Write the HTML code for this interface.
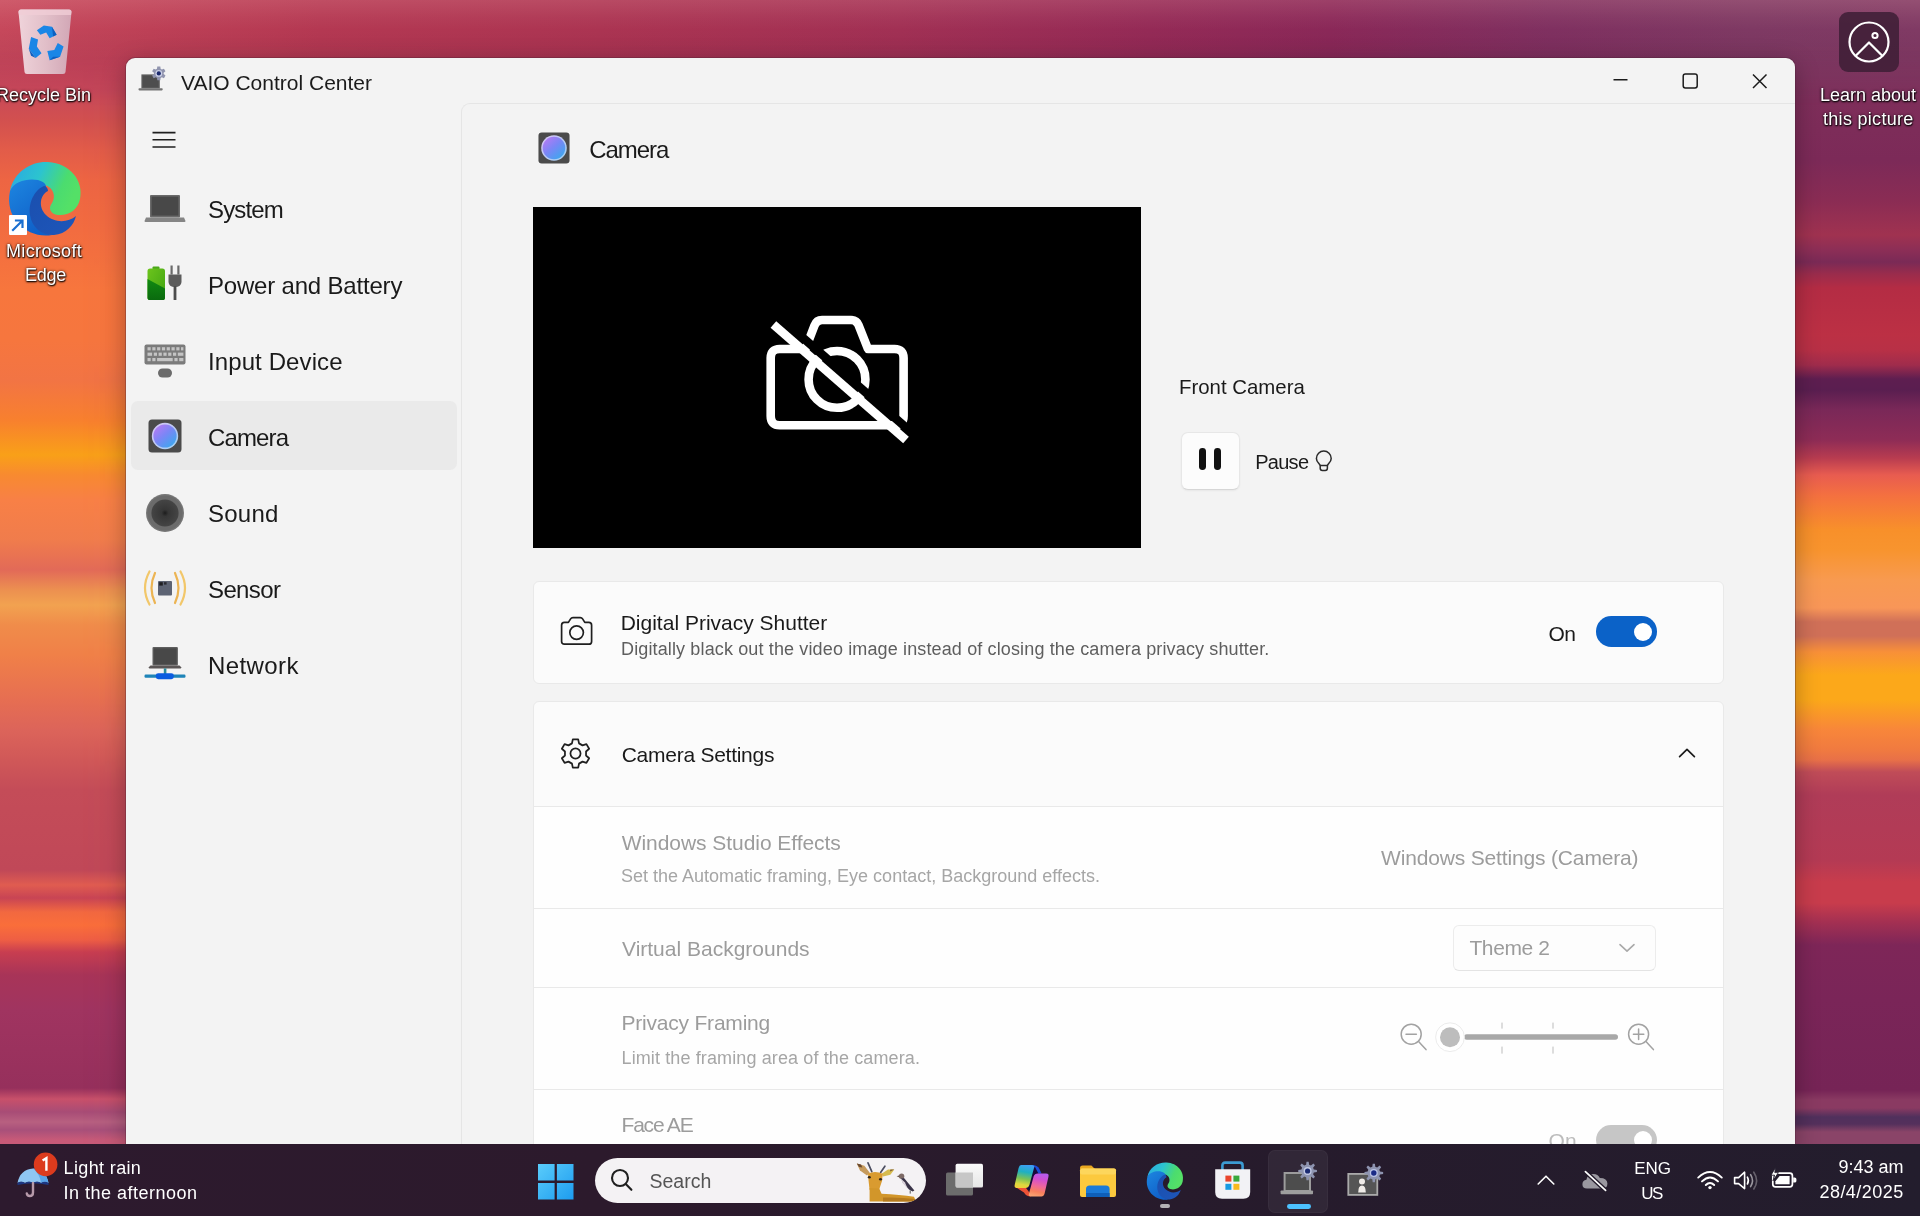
<!DOCTYPE html>
<html>
<head>
<meta charset="utf-8">
<title>VAIO Control Center</title>
<style>
*{box-sizing:border-box;margin:0;padding:0}
html,body{width:1920px;height:1216px;overflow:hidden}
body{font-family:"Liberation Sans",sans-serif;position:relative;background:#b03a55;color:#1b1b1b}
.abs{position:absolute}
svg{position:absolute;overflow:visible}
.t{position:absolute;white-space:nowrap;line-height:1}
#win,#tb,.dl{will-change:transform}
/* wallpaper */
#wpL{position:absolute;left:0;top:0;width:1920px;height:1216px;
background:linear-gradient(to bottom,#d05a62 0px,#c6465a 30px,#c4425a 60px,#c8485a 90px,#d2504f 120px,#e25c49 150px,#ed6543 180px,#f26c40 230px,#f7763d 290px,#f6763e 340px,#f27444 380px,#f8802e 420px,#f9a018 455px,#f88a30 475px,#f88046 500px,#f07c4c 540px,#e26a58 570px,#ec9050 590px,#f2a250 605px,#f08c4a 625px,#f08048 655px,#e66e52 700px,#dc645a 730px,#d05858 760px,#c44c58 790px,#c04858 870px,#e05c50 885px,#c84454 898px,#f26840 912px,#fa6e3a 925px,#ee5e44 940px,#c83e50 952px,#a83458 975px,#a03460 1010px,#96305c 1088px,#c8506a 1099px,#a84c76 1112px,#b86080 1122px,#a8507a 1130px,#c85a78 1140px,#c85a78 1144px);}
#wpR{position:absolute;left:0;top:0;width:1920px;height:1216px;
background:linear-gradient(to bottom,#823a64 0px,#7e2e5a 100px,#7c2a58 160px,#8a2c54 200px,#a03250 235px,#8c2e56 250px,#7a2a56 262px,#9a2c4c 274px,#b42c44 288px,#bc3044 335px,#b83046 350px,#a02c4c 365px,#5e1e50 379px,#5a1e50 390px,#7a2858 410px,#8e2c56 440px,#b83c50 458px,#e85c50 475px,#f47040 495px,#f8902a 530px,#f8942e 550px,#f89a50 580px,#f89658 608px,#d07058 622px,#d07058 636px,#f89038 652px,#fca81a 675px,#fca81a 700px,#f8863a 730px,#f07a40 750px,#e87048 760px,#c04c58 772px,#b03c58 795px,#b43a54 860px,#c83c4c 882px,#c83c4c 903px,#a43052 922px,#7e2658 945px,#7a2558 1000px,#762456 1090px,#8a3a62 1100px,#8a3a62 1108px,#50305c 1117px,#54305c 1124px,#8a4468 1132px,#8a4468 1144px);
-webkit-mask-image:linear-gradient(to right,transparent 80px,#000 1500px);mask-image:linear-gradient(to right,transparent 80px,#000 1500px);}
#wpT{position:absolute;left:0;top:0;width:1920px;height:110px;
background:linear-gradient(to bottom,rgba(255,190,190,.16) 0,rgba(255,190,190,.05) 18px,rgba(40,0,30,0) 30px,rgba(40,0,30,.06) 58px,rgba(40,0,30,.06) 110px),linear-gradient(to right,#c6485b 0,#bd4056 150px,#b43852 320px,#ab3452 600px,#a13054 900px,#942a56 1150px,#8a2858 1330px,#7f3060 1550px,#7e3963 1750px,#803a64 1920px);
-webkit-mask-image:linear-gradient(to bottom,#000 45px,transparent 105px);mask-image:linear-gradient(to bottom,#000 45px,transparent 105px)}
.dl{position:absolute;color:#fff;font-size:18px;line-height:24px;text-align:center;white-space:nowrap;text-shadow:0 1px 2px rgba(0,0,0,.9),0 0 3px rgba(0,0,0,.7),1px 1px 1px rgba(0,0,0,.6)}
/* window */
#win{position:absolute;left:126px;top:58px;width:1669px;height:1090px;background:#f3f3f3;border-radius:9px 9px 0 0;box-shadow:0 0 0 1px rgba(70,30,50,.30),0 6px 24px rgba(0,0,0,.30);overflow:hidden}
#content{position:absolute;left:335px;top:45px;width:1340px;height:1050px;border-left:1px solid #e5e5e5;border-top:1px solid #e5e5e5;border-radius:9px 0 0 0;background:#f3f3f3}
.nav{position:absolute;left:82px;font-size:24px;line-height:28px;white-space:nowrap;color:#1a1a1a}
#sel{position:absolute;left:5px;top:343px;width:326px;height:69.4px;border-radius:7px;background:#eaeaea}
.card{position:absolute;left:407px;width:1191px;background:#fbfbfb;border:1px solid #e9e9e9;border-radius:6px}
.h{font-size:21px;color:#1a1a1a}
.d{font-size:18px;color:#5e5e5e}
.dis{color:#9c9c9c}
.disd{color:#a6a6a6}
.row{position:absolute;left:0;width:1189px;border-top:1px solid #e9e9e9;background:#fefefe}
/* taskbar */
#tb{position:absolute;left:0;top:1144px;width:1920px;height:72px;background:linear-gradient(to right,#2d1a2e 0,#2c1a2c 600px,#261b2c 1300px,#231d2d 1920px)}
.tw{color:#fff;font-size:18px}
</style>
</head>
<body>
<div id="wpL"></div>
<div id="wpR"></div>
<div id="wpT"></div>

<!-- ===== desktop icons ===== -->
<!-- recycle bin -->
<svg style="left:14px;top:6px" width="62" height="72" viewBox="0 0 62 72">
  <defs>
    <linearGradient id="rbg" x1="0" y1="0" x2="1" y2="0"><stop offset="0" stop-color="#f3dfe5" stop-opacity=".92"/><stop offset=".5" stop-color="#e6d0d8" stop-opacity=".88"/><stop offset="1" stop-color="#d4b4c2" stop-opacity=".88"/></linearGradient>
  </defs>
  <path d="M4.5,6 Q4.5,3.5 7,3.5 L55,3.5 Q57.5,3.5 57.5,6 L51.5,66 Q51.3,68 49,68 L13,68 Q10.7,68 10.5,66 Z" fill="url(#rbg)"/>
  <path d="M4.5,6 Q4.5,3.5 7,3.5 L55,3.5 Q57.5,3.5 57.5,6 L57,9 L5,9Z" fill="#f0cdd6" opacity=".8"/>
  <g transform="translate(31,37.5) scale(1.16) translate(-31,-33.5)"><g fill="#1a86e6">
    <path d="M24,22 l6,-4 l7,1 l4,7 l-6,3 l-3,-5 l-5,2 z"/>
    <path d="M19,28 l6,2 l-1,6 l4,6 l-5,4 l-6,-8 z"/>
    <path d="M33,40 l6,-1 l3,-6 l5,3 l-3,9 l-9,3 z"/>
  </g>
  <g fill="#0d5fc0"><path d="M37,19 l4,7 l-3,1.5z"/><path d="M17,38 l6,8 l-4,-2z"/><path d="M44,45 l-9,3 l3,-3z"/></g></g>
</svg>
<div class="dl" id="rb" style="left:-4px;top:83px">Recycle Bin</div>

<!-- edge -->
<svg style="left:8px;top:161px" width="74" height="75" viewBox="0 0 74 75">
  <defs>
    <linearGradient id="eg1" x1="0" y1="0" x2="1" y2="0.35"><stop offset="0" stop-color="#2aa6e4"/><stop offset=".45" stop-color="#2cc4cf"/><stop offset=".8" stop-color="#4bdc6f"/><stop offset="1" stop-color="#54e067"/></linearGradient>
    <linearGradient id="eg2" x1="0" y1="0" x2="0.6" y2="1"><stop offset="0" stop-color="#1d86e0"/><stop offset="1" stop-color="#0f5fc8"/></linearGradient>
    <linearGradient id="eg3" x1="0" y1="0" x2="1" y2="1"><stop offset="0" stop-color="#1a4fae"/><stop offset="1" stop-color="#1e56ba"/></linearGradient>
  </defs>
  <!-- top swoosh -->
  <path d="M2,30 C6,10 24,0 40,1 C62,2 76,20 72,38 C70,49 60,55 50,54 C42,53 40,47 44,42 C48,36 46,26 36,24 C26,20 8,20 2,30Z" fill="url(#eg1)"/>
  <!-- left blue -->
  <path d="M2,30 C6,20 20,17 30,19 C38,21 40,26 36,29 C26,36 22,50 32,66 C36,71 42,74 44,74 C20,78 -4,58 2,30Z" fill="url(#eg2)"/>
  <!-- dark wave -->
  <path d="M36,25 C28,28 20,40 22,54 C24,68 36,75 46,74 C58,73 66,64 68,55 C60,62 46,62 38,54 C30,46 32,34 40,30 C40,27 38,25 36,25Z" fill="url(#eg3)"/>
</svg>
<div class="abs" style="left:9px;top:215px;width:18px;height:20px;background:#fff;border-radius:1px"></div>
<svg style="left:9px;top:215px" width="18" height="20" viewBox="0 0 18 20"><path d="M4,15 L13,6 M7,5.5 L13.5,5.5 L13.5,12" stroke="#1a6fd0" stroke-width="2.2" fill="none" stroke-linecap="square"/></svg>
<div class="dl" id="ms" style="left:6.4px;top:238.5px;letter-spacing:0.35px">Microsoft</div>
<div class="dl" id="ed" style="left:24.6px;top:263.1px;letter-spacing:-0.3px">Edge</div>

<!-- learn about this picture -->
<div class="abs" style="left:1839px;top:12px;width:60px;height:60px;border-radius:9px;background:rgba(62,30,54,.86)"></div>
<svg style="left:1847px;top:20px" width="44" height="44" viewBox="0 0 44 44" fill="none" stroke="#fff" stroke-width="2.2">
  <circle cx="22" cy="22" r="19.5"/>
  <circle cx="28" cy="15.5" r="2.6" stroke-width="2"/>
  <path d="M8.5,36 L22,22.5 L35.5,36" stroke-linejoin="round"/>
</svg>
<div class="dl" id="la" style="left:1819.7px;top:83px">Learn about</div>
<div class="dl" id="tp" style="left:1822.6px;top:106.8px;letter-spacing:0.3px">this picture</div>

<!-- ===== app window ===== -->
<div id="win">
  <!-- title icon: laptop + gear (win-relative) -->
  <svg style="left:12px;top:5px" width="30" height="30" viewBox="0 0 30 30">
    <rect x="3.4" y="11.4" width="18.4" height="14" fill="#5c5c5c"/>
    <rect x="4.8" y="12.8" width="15.6" height="11.4" fill="#4e4e4e"/>
    <rect x="0.5" y="25.2" width="24.2" height="2.2" rx=".8" fill="#747474"/>
    <g transform="translate(20.8,10.4)"><path d="M-1.80,-4.56 L-1.53,-6.83 L1.53,-6.83 L1.80,-4.56 L3.04,-3.84 L5.15,-4.74 L6.68,-2.09 L4.85,-0.72 L4.85,0.72 L6.68,2.09 L5.15,4.74 L3.04,3.84 L1.80,4.56 L1.53,6.83 L-1.53,6.83 L-1.80,4.56 L-3.04,3.84 L-5.15,4.74 L-6.68,2.09 L-4.85,0.72 L-4.85,-0.72 L-6.68,-2.09 L-5.15,-4.74 L-3.04,-3.84Z" fill="#9094ae"/><circle r="3.4" fill="#c9cee6"/><circle r="2.1" fill="#1c2a6e"/></g>
  </svg>
  <div class="t" id="ttl" style="left:55px;top:13px;font-size:21px;line-height:24px">VAIO Control Center</div>
  <!-- window buttons -->
  <svg style="left:1480px;top:8px" width="170" height="30" viewBox="0 0 170 30" fill="none" stroke="#1a1a1a" stroke-width="1.5">
    <path d="M7.5,13.8 H21.5"/>
    <rect x="77.2" y="8" width="14" height="14" rx="2.2"/>
    <path d="M147,8.5 L160.5,22 M160.5,8.5 L147,22"/>
  </svg>
  <div id="content"></div>
  <!-- hamburger -->
  <svg style="left:26px;top:72px" width="26" height="20" viewBox="0 0 26 20" stroke="#1f1f1f" stroke-width="1.6"><path d="M0.5,2.6 H23.5 M0.5,9.8 H23.5 M0.5,17 H23.5"/></svg>
  <div id="sel"></div>

  <!-- System -->
  <svg style="left:17px;top:134px" width="44" height="34" viewBox="0 0 44 34">
    <rect x="7" y="3" width="30" height="22.5" rx="1" fill="#6a6a6a"/>
    <rect x="8.6" y="4.6" width="26.8" height="19" fill="#484848"/>
    <path d="M3,25.5 H41 L42.5,29 Q42.5,30 41.5,30 H2.5 Q1.5,30 1.5,29Z" fill="#858585"/>
  </svg>
  <div class="nav" id="n1" style="top:138px;letter-spacing:-0.86px">System</div>

  <!-- Power and Battery -->
  <svg style="left:20px;top:206px" width="38" height="38" viewBox="0 0 38 38">
    <defs><linearGradient id="bt1" x1="0" y1="0" x2="1" y2="1"><stop offset="0" stop-color="#6cc41c"/><stop offset="1" stop-color="#3fa312"/></linearGradient>
    <linearGradient id="bt2" x1="0" y1="0" x2="0" y2="1"><stop offset="0" stop-color="#118a12"/><stop offset="1" stop-color="#0a6a0e"/></linearGradient></defs>
    <rect x="6.5" y="2.5" width="7" height="3" rx="1" fill="#4aa818"/>
    <rect x="1.5" y="4.5" width="17.5" height="31.5" rx="2.6" fill="url(#bt1)"/>
    <path d="M1.5,15 L19,24.5 V33.4 Q19,36 16.4,36 H4.1 Q1.5,36 1.5,33.4Z" fill="url(#bt2)"/>
    <rect x="24.5" y="1.5" width="2.2" height="9" fill="#6a6a6a"/><rect x="31.3" y="1.5" width="2.2" height="9" fill="#6a6a6a"/>
    <path d="M22.5,10.5 H35.5 V17.5 Q35.5,23 29,23 Q22.5,23 22.5,17.5Z" fill="#5c5c5c"/>
    <rect x="27.6" y="22" width="2.8" height="14" fill="#4c4c4c"/>
  </svg>
  <div class="nav" id="n2" style="top:214px;letter-spacing:-0.19px">Power and Battery</div>

  <!-- Input Device -->
  <svg style="left:17px;top:285px" width="44" height="36" viewBox="0 0 44 36">
    <rect x="1.5" y="1.5" width="41" height="20" rx="2" fill="#7b7b7b"/>
    <g fill="#c4c4c4">
      <rect x="4.5" y="4.2" width="3.2" height="3.2"/><rect x="9.3" y="4.2" width="3.2" height="3.2"/><rect x="14.1" y="4.2" width="3.2" height="3.2"/><rect x="18.9" y="4.2" width="3.2" height="3.2"/><rect x="23.7" y="4.2" width="3.2" height="3.2"/><rect x="28.5" y="4.2" width="3.2" height="3.2"/><rect x="33.3" y="4.2" width="3.2" height="3.2"/><rect x="38" y="4.2" width="2.4" height="3.2"/>
      <rect x="4.5" y="9.6" width="4.6" height="3.2"/><rect x="10.8" y="9.6" width="3.2" height="3.2"/><rect x="15.6" y="9.6" width="3.2" height="3.2"/><rect x="20.4" y="9.6" width="3.2" height="3.2"/><rect x="25.2" y="9.6" width="3.2" height="3.2"/><rect x="30" y="9.6" width="3.2" height="3.2"/><rect x="34.8" y="9.6" width="5.6" height="3.2"/>
      <rect x="4.5" y="15" width="3.2" height="3.2"/><rect x="9.3" y="15" width="3.2" height="3.2"/><rect x="14.1" y="15" width="15.6" height="3.2"/><rect x="31.4" y="15" width="3.2" height="3.2"/><rect x="36.2" y="15" width="4.2" height="3.2"/>
    </g>
    <rect x="15" y="25.5" width="14" height="9" rx="4.5" fill="#6b6b6b"/>
  </svg>
  <div class="nav" id="n3" style="top:290px;letter-spacing:0.1px">Input Device</div>

  <!-- Camera -->
  <svg style="left:22px;top:361px" width="34" height="34" viewBox="0 0 34 34">
    <defs><linearGradient id="cm1" x1="0.15" y1="0.1" x2="0.85" y2="0.9"><stop offset="0" stop-color="#b07cf4"/><stop offset=".45" stop-color="#7b86f6"/><stop offset="1" stop-color="#3fa6ee"/></linearGradient>
    <linearGradient id="cm2" x1="0" y1="0" x2="1" y2="1"><stop offset="0" stop-color="#d8c4f6"/><stop offset="1" stop-color="#9fd0f2"/></linearGradient></defs>
    <rect x=".5" y=".5" width="33" height="33" rx="3.5" fill="#4b4b4b"/>
    <circle cx="17" cy="17" r="13.2" fill="url(#cm2)"/>
    <circle cx="17" cy="17" r="11.6" fill="url(#cm1)"/>
  </svg>
  <div class="nav" id="n4" style="top:366px;letter-spacing:-0.87px">Camera</div>

  <!-- Sound -->
  <svg style="left:19px;top:435px" width="40" height="40" viewBox="0 0 40 40">
    <defs><radialGradient id="sd1"><stop offset="0" stop-color="#1c1c1c"/><stop offset=".25" stop-color="#363636"/><stop offset="1" stop-color="#454545"/></radialGradient></defs>
    <circle cx="20" cy="20" r="19" fill="#767676"/>
    <circle cx="20" cy="20" r="17.6" fill="#6b6b6b"/>
    <circle cx="20" cy="20" r="13.6" fill="url(#sd1)"/>
  </svg>
  <div class="nav" id="n5" style="top:442px;letter-spacing:0.24px">Sound</div>

  <!-- Sensor -->
  <svg style="left:17px;top:511px" width="44" height="38" viewBox="0 0 44 38" fill="none">
    <rect x="15" y="12" width="14" height="14.5" rx="1" fill="#5d6373"/>
    <rect x="16.2" y="13.2" width="3.6" height="3.4" fill="#1e1e22"/><rect x="21" y="13.2" width="2.6" height="2.4" fill="#2a2a30"/>
    <g stroke-linecap="round" stroke-width="2.2">
      <path d="M12,4 Q5,19 12,34" stroke="#ecb453"/>
      <path d="M6.5,2.5 Q-2.5,19 6.5,35.5" stroke="#f2c76a"/>
      <path d="M32,4 Q39,19 32,34" stroke="#ecb453"/>
      <path d="M37.5,2.5 Q46.5,19 37.5,35.5" stroke="#f2c76a"/>
    </g>
  </svg>
  <div class="nav" id="n6" style="top:518px;letter-spacing:-0.63px">Sensor</div>

  <!-- Network -->
  <svg style="left:17px;top:587px" width="44" height="36" viewBox="0 0 44 36">
    <rect x="9.5" y="2" width="25.4" height="18.5" rx="1" fill="#5e5e5e"/>
    <rect x="10.8" y="3.3" width="22.8" height="16" fill="#484848"/>
    <path d="M7.5,20.5 H36.5 L38.5,22.6 Q38.5,23.4 37.5,23.4 H6.5 Q5.5,23.4 5.5,22.6Z" fill="#5a5555"/>
    <rect x="20.8" y="23.4" width="2.6" height="6" fill="#2b8c9c"/>
    <rect x="1.5" y="29.6" width="41" height="3.2" rx="1.2" fill="#1e84b8"/>
    <rect x="12.8" y="28.2" width="18" height="6" rx="2.4" fill="#0b5ce0"/>
  </svg>
  <div class="nav" id="n7" style="top:594px;letter-spacing:0.4px">Network</div>

  <!-- ===== page content ===== -->
  <svg style="left:412px;top:74px" width="32" height="32" viewBox="0 0 34 34">
    <rect x=".5" y=".5" width="33" height="33" rx="3.5" fill="#4b4b4b"/>
    <circle cx="17" cy="17" r="13.6" fill="url(#cm2)"/>
    <circle cx="17" cy="17" r="12" fill="url(#cm1)"/>
  </svg>
  <div class="t" id="hdr" style="left:463.3px;top:78.4px;font-size:24px;line-height:28px;color:#1a1a1a;letter-spacing:-1.06px">Camera</div>

  <div class="abs" style="left:407px;top:149px;width:608px;height:341px;background:#000">
    <svg style="left:0;top:0" width="608" height="341" viewBox="0 0 608 341" fill="none" stroke="#fff" stroke-width="8.6" stroke-linejoin="round">
      <path d="M237.7,151 Q237.7,142 246.7,142 L272.5,142 L281.5,118.5 Q283.5,113 289,113 L318,113 Q323.5,113 325.5,118 L335,142 L361.6,142 Q370.6,142 370.6,151 L370.6,209 Q370.6,218.2 361.6,218.2 L246.7,218.2 Q237.7,218.2 237.7,209 Z"/>
      <circle cx="304" cy="172.4" r="28.4"/>
      <path d="M246.6,110.6 L381.6,228" stroke="#000" stroke-width="8.6" stroke-linecap="butt"/>
      <path d="M240.4,117.6 L373,233" stroke-linecap="butt"/>
    </svg>
  </div>

  <div class="t" id="fc" style="left:1053px;top:316.9px;font-size:20.4px;line-height:24px;color:#1a1a1a">Front Camera</div>
  <div class="abs" style="left:1054.5px;top:373.5px;width:59px;height:58px;background:#fcfcfc;border:1px solid #e7e7e7;border-bottom-color:#d6d6d6;border-radius:7px;box-shadow:0 1px 2px rgba(0,0,0,.05)"></div>
  <div class="abs" style="left:1073px;top:390px;width:7.2px;height:22px;border-radius:3.4px;background:#111"></div>
  <div class="abs" style="left:1087.6px;top:390px;width:7.2px;height:22px;border-radius:3.4px;background:#111"></div>
  <div class="t" id="pz" style="left:1129.25px;top:391.8px;line-height:24px;font-size:20px;color:#1a1a1a;letter-spacing:-0.74px">Pause</div>
  <!-- lightbulb -->
  <svg style="left:1188px;top:392px" width="20" height="24" viewBox="0 0 20 24" fill="none" stroke="#2a2a2a" stroke-width="1.5">
    <path d="M6.2,15.5 C5.6,13.4 2.4,12 2.4,8.4 A7.4,7.4 0 0 1 17.2,8.4 C17.2,12 14,13.4 13.4,15.5"/>
    <path d="M6.2,15.6 H13.4 V18.2 Q13.4,20.4 11.2,20.4 H8.4 Q6.2,20.4 6.2,18.2Z" stroke-linejoin="round"/>
  </svg>

  <!-- card 1 -->
  <div class="card" style="top:523px;height:103px">
    <svg style="left:26px;top:34px" width="34" height="30" viewBox="0 0 34 30" fill="none" stroke="#1f1f1f" stroke-width="1.7" stroke-linejoin="round">
      <path d="M1.6,9.2 Q1.6,6.4 4.4,6.4 H8.4 L10.6,2.9 Q11.4,1.6 12.9,1.6 H20.3 Q21.8,1.6 22.6,2.9 L24.8,6.4 H28.8 Q31.6,6.4 31.6,9.2 V25.4 Q31.6,28.2 28.8,28.2 H4.4 Q1.6,28.2 1.6,25.4Z"/>
      <circle cx="16.6" cy="16.6" r="6.8"/>
    </svg>
    <div class="t h" id="dps" style="left:86.7px;top:28.7px;line-height:24px">Digital Privacy Shutter</div>
    <div class="t d" id="dpd" style="left:87px;top:55.8px;line-height:22px;letter-spacing:0.135px">Digitally black out the video image instead of closing the camera privacy shutter.</div>
    <div class="t h" id="on1" style="left:1014.6px;top:39.5px;line-height:24px;letter-spacing:-0.75px">On</div>
    <div class="abs" style="left:1061.6px;top:34.4px;width:61px;height:30.6px;border-radius:15.3px;background:#0b62c8"></div>
    <div class="abs" style="left:1100px;top:40.9px;width:18px;height:18px;border-radius:9px;background:#fff"></div>
  </div>

  <!-- card 2 -->
  <div class="card" style="top:643px;height:470px;border-radius:6px 6px 0 0">
    <svg style="left:25px;top:35px" width="33" height="33" viewBox="0 0 32 32" fill="none" stroke="#1f1f1f" stroke-width="1.7" stroke-linejoin="round">
      <path d="M12.58,6.18 L13.38,2.25 L18.62,2.25 L19.42,6.18 L22.80,8.13 L26.60,6.85 L29.22,11.40 L26.22,14.05 L26.22,17.95 L29.22,20.60 L26.60,25.15 L22.80,23.87 L19.42,25.82 L18.62,29.75 L13.38,29.75 L12.58,25.82 L9.20,23.87 L5.40,25.15 L2.78,20.60 L5.78,17.95 L5.78,14.05 L2.78,11.40 L5.40,6.85 L9.20,8.13Z" stroke-linejoin="round"/>
      <circle cx="16" cy="16" r="4.9"/>
    </svg>
    <div class="t h" id="cs" style="left:87.7px;top:41.4px;line-height:24px;letter-spacing:-0.26px">Camera Settings</div>
    <svg style="left:1143px;top:44px" width="20" height="14" viewBox="0 0 20 14" fill="none" stroke="#1a1a1a" stroke-width="1.7" stroke-linecap="round" stroke-linejoin="round"><path d="M2.6,10.6 L10,3.4 L17.4,10.6"/></svg>

    <div class="row" style="top:104px;height:102px">
      <div class="t h dis" id="wse" style="left:87.7px;top:23.7px;line-height:24px;letter-spacing:-0.05px">Windows Studio Effects</div>
      <div class="t d disd" id="wsd" style="left:87px;top:58.4px;line-height:22px">Set the Automatic framing, Eye contact, Background effects.</div>
      <div class="t h dis" id="wsc" style="left:847px;top:39px;line-height:24px;letter-spacing:-0.16px">Windows Settings (Camera)</div>
    </div>
    <div class="row" style="top:206px;height:79px">
      <div class="t h dis" id="vb" style="left:88px;top:27.7px;line-height:24px">Virtual Backgrounds</div>
      <div class="abs" style="left:918.6px;top:15.5px;width:203px;height:46px;border:1px solid #ececec;border-bottom-color:#e4e4e4;border-radius:6px;background:#fdfdfd"></div>
      <div class="t h dis" id="th2" style="left:935.4px;top:27px;line-height:24px;letter-spacing:-0.38px">Theme 2</div>
      <svg style="left:1084px;top:33px" width="18" height="12" viewBox="0 0 18 12" fill="none" stroke="#a9a9a9" stroke-width="1.6" stroke-linecap="round" stroke-linejoin="round"><path d="M2,2.6 L9,9.2 L16,2.6"/></svg>
    </div>
    <div class="row" style="top:285px;height:102px">
      <div class="t h dis" id="pf" style="left:87.5px;top:23.4px;line-height:24px;letter-spacing:-0.21px">Privacy Framing</div>
      <div class="t d disd" id="pfd" style="left:87.5px;top:58.8px;line-height:22px;letter-spacing:0.12px">Limit the framing area of the camera.</div>
      <!-- slider: row origin body (534,988) -->
      <svg style="left:864px;top:30px" width="260" height="40" viewBox="0 0 260 40" fill="none">
        <g stroke="#a2a2a2" stroke-width="1.5" stroke-linecap="round">
          <circle cx="13.2" cy="16.2" r="10"/><path d="M8,16.2 H18.4"/><path d="M20.6,23.6 L28,31.6"/>
          <circle cx="240.6" cy="16.2" r="10"/><path d="M235.4,16.2 H245.8 M240.6,11 V21.4"/><path d="M248,23.6 L255.4,31.6"/>
        </g>
        <rect x="66" y="16.2" width="154" height="5.6" rx="2.8" fill="#a8a8a8"/>
        <g stroke="#bcbcbc" stroke-width="1"><path d="M104,4.6 V10.6 M104,28.6 V35.6 M155,4.6 V10.6 M155,28.6 V35.6"/></g>
        <circle cx="52" cy="19.2" r="14.4" fill="#fff" stroke="#ececec" stroke-width="1"/>
        <circle cx="52" cy="19.2" r="10" fill="#bdbdbd"/>
      </svg>
    </div>
    <div class="row" style="top:387px;height:90px">
      <div class="t h dis" id="fae" style="left:87.5px;top:23.4px;line-height:24px;letter-spacing:-1.2px">Face AE</div>
      <div class="t h" id="on2" style="left:1014.6px;top:38.5px;line-height:24px;color:#bcbcbc">On</div>
      <div class="abs" style="left:1061.6px;top:34.8px;width:61px;height:30.6px;border-radius:15.3px;background:#c6c6c6"></div>
      <div class="abs" style="left:1100px;top:41.2px;width:18px;height:18px;border-radius:9px;background:#fff"></div>
    </div>
  </div>
</div>

<!-- ===== taskbar ===== -->
<div id="tb">
  <!-- weather -->
  <svg style="left:14px;top:6px" width="50" height="50" viewBox="0 0 50 50">
    <path d="M3.5,33 Q6,19.5 19,18.5 Q32,19.5 34.5,33 Q31,30.6 27,33 Q23,30.6 19,33 Q15,30.6 11,33 Q7,30.6 3.5,33Z" fill="#8fc6f2"/>
    <path d="M19,18.5 Q32,19.5 34.5,33 Q31,30.6 27,33 Q26,24 19,18.5Z" fill="#5aa4e8"/>
    <path d="M3.5,33 Q7,30.6 11,33 Q15,30.6 19,33 Q23,30.6 27,33 Q31,30.6 34.5,33 L34.5,35 Q19,31.4 3.5,35Z" fill="#1b3a8c" opacity=".9"/>
    <path d="M19,33 V42.5 Q19,46 15.8,46 Q13,46 12.8,43.4" fill="none" stroke="#b79aaa" stroke-width="2.4" stroke-linecap="round"/>
    <circle cx="31.6" cy="14.4" r="11.8" fill="#dc3b1e"/>
    <path d="M28.6,10.6 L32.4,8.2 V20.8" fill="none" stroke="#fff" stroke-width="2.4" stroke-linejoin="miter"/>
  </svg>
  <div class="t tw" id="w1" style="left:63.6px;top:13.8px;line-height:20px;letter-spacing:0.36px">Light rain</div>
  <div class="t tw" id="w2" style="left:63.6px;top:38.5px;line-height:20px;letter-spacing:0.48px">In the afternoon</div>

  <!-- start -->
  <svg style="left:538px;top:19.6px" width="36" height="36" viewBox="0 0 36 36">
    <defs><linearGradient id="wn" x1="0" y1="0" x2="1" y2="1"><stop offset="0" stop-color="#5accfa"/><stop offset="1" stop-color="#1d9cf0"/></linearGradient></defs>
    <path d="M0,0 H16.6 V16.6 H0Z M18.9,0 H35.5 V16.6 H18.9Z M0,18.9 H16.6 V35.5 H0Z M18.9,18.9 H35.5 V35.5 H18.9Z" fill="url(#wn)"/>
  </svg>

  <!-- search -->
  <div class="abs" style="left:595px;top:13.6px;width:331px;height:45px;border-radius:22.5px;background:#f4f2f4;overflow:hidden">
    <svg style="left:255px;top:0" width="76" height="45" viewBox="0 0 76 45">
      <!-- deer -->
      <path d="M6.8,5.4 L14.4,7.8 L19.8,14.8 L17,17.6 L10,12.4Z" fill="#c59a5c"/>
      <path d="M6.8,5.4 L11,6.6 L12.4,9.6 L9,9Z" fill="#6a4a30"/>
      <path d="M44.3,11.5 L38,11.6 L32,15.4 L33,18.6 L40.4,16.8Z" fill="#d6bb4e"/>
      <path d="M44.3,11.5 L40.4,11.4 L40,13.4Z" fill="#7a5a30"/>
      <path d="M18,4.9 L21.8,13.6" stroke="#4c4e60" stroke-width="1.7" fill="none" stroke-linecap="round"/>
      <path d="M34.9,8.2 L30.6,14.4" stroke="#4c4e60" stroke-width="1.7" fill="none" stroke-linecap="round"/>
      <path d="M18,15.6 Q25,12.2 32.8,15.8 L32,23 L29,32 Q24,34.6 19.6,32 L18.6,23Z" fill="#d99b30"/>
      <path d="M19.6,30 L29.2,30.6 L31.6,35.8 Q50,36.6 64,38.8 L66,43.6 L19.6,43.6Z" fill="#d2962a"/>
      <path d="M33,39.6 Q50,39 65,41 L66,43.6 L33,43.6Z" fill="#b57a1e"/>
      <ellipse cx="19.3" cy="19.3" rx="1.5" ry="1.2" fill="#2e2216"/><ellipse cx="30.5" cy="21.2" rx="1.5" ry="1.2" fill="#2e2216"/>
      <!-- bird -->
      <circle cx="51.6" cy="18.2" r="2.7" fill="#7d6a66"/>
      <path d="M49.4,17.2 L46.6,18.2 L49.6,19.4Z" fill="#6b5a50"/>
      <path d="M51,20.4 L54,20 L64.4,32.6 L62.6,33.6 L59,31.4 L53,25Z" fill="#3a3448"/>
      <path d="M50.8,20.6 L53,25.4 L57.6,30.4 L55,24.4Z" fill="#ddd6de"/>
      <path d="M60.2,32.4 V35.6" stroke="#555" stroke-width="1"/>
    </svg>
  </div>
  <svg style="left:608px;top:22px" width="28" height="28" viewBox="0 0 28 28" fill="none" stroke="#1f1f1f" stroke-width="2.1" stroke-linecap="round"><circle cx="12" cy="12" r="8"/><path d="M18,18.2 L23.4,23.8"/></svg>
  <div class="t" id="srch" style="left:649.5px;top:25.7px;font-size:19.5px;line-height:22px;color:#555">Search</div>

  <!-- task view -->
  <svg style="left:945px;top:18px" width="40" height="36" viewBox="0 0 40 36">
    <defs><linearGradient id="tv1" x1="0" y1="0" x2="0" y2="1"><stop offset="0" stop-color="#fafafa"/><stop offset="1" stop-color="#e6e6e6"/></linearGradient></defs>
    <rect x="1" y="10.6" width="27" height="23" rx="1.6" fill="#6c6c6c"/>
    <rect x="10.6" y="1.8" width="27.4" height="23.8" rx="1.6" fill="url(#tv1)"/>
    <path d="M10.6,10.6 H28 V25.6 H12.2 Q10.6,25.6 10.6,24Z" fill="#c2c2c2" opacity=".9"/>
  </svg>

  <!-- copilot -->
  <svg style="left:1013px;top:19px" width="38" height="36" viewBox="0 0 38 36">
    <defs>
      <linearGradient id="cp1" x1="0.55" y1="0" x2="0.4" y2="1"><stop offset="0" stop-color="#3d9ff2"/><stop offset=".3" stop-color="#1fb0c2"/><stop offset=".6" stop-color="#7cc255"/><stop offset=".85" stop-color="#dcd83e"/><stop offset="1" stop-color="#f0cf3c"/></linearGradient>
      <linearGradient id="cp2" x1="0.6" y1="0" x2="0.4" y2="1"><stop offset="0" stop-color="#b65cec"/><stop offset=".25" stop-color="#d24fd0"/><stop offset=".55" stop-color="#f0689a"/><stop offset=".8" stop-color="#f8805c"/><stop offset="1" stop-color="#f9a070"/></linearGradient>
    </defs>
    <path d="M19,2 Q24.4,2 26.4,6 L28.6,10.6 H23 L20,6Z" fill="#1c4cd8"/>
    <path d="M4,25 H13 L16,29 L18,33.4 Q13,33.4 11,29.4Z" fill="#ee5236"/>
    <path d="M14,7 L22,4 L25.4,10.6 L22.4,13 L18,28 L14,26Z" fill="#180a3c"/>
    <path d="M8,2 H19 Q22,2 21,5 L16.4,22 Q15.4,25 12.4,25 H4.4 Q0.8,25 1.8,21.6 L5.6,5 Q6.4,2 8,2Z" fill="url(#cp1)"/>
    <path d="M24.8,10.6 H33 Q36.4,10.6 35.4,14 L31.6,30.4 Q30.8,33.4 28.4,33.4 H18 Q15,33.4 16,30.4 L20.6,13.6 Q21.6,10.6 24.8,10.6Z" fill="url(#cp2)"/>
  </svg>

  <!-- file explorer -->
  <svg style="left:1079px;top:19px" width="38" height="36" viewBox="0 0 38 36">
    <path d="M1,5 Q1,2.4 3.6,2.4 H12.4 L16,6 H1Z" fill="#e9a820"/>
    <rect x="1" y="5.4" width="36" height="28.6" rx="2" fill="#fcc93e"/>
    <rect x="1" y="5.4" width="36" height="6" rx="2" fill="#fdd65c"/>
    <path d="M7,34 V26 Q7,22.4 10.6,22.4 H27 Q30.6,22.4 30.6,26 V34Z" fill="#1a7ad8"/>
    <rect x="7" y="30" width="23.6" height="4" fill="#0f5fb8"/>
  </svg>

  <!-- edge small -->
  <svg style="left:1146px;top:17.6px" width="38" height="38" viewBox="0 0 74 75">
    <path d="M2,30 C6,10 24,0 40,1 C62,2 76,20 72,38 C70,49 60,55 50,54 C42,53 40,47 44,42 C48,36 46,26 36,24 C26,20 8,20 2,30Z" fill="url(#eg1)"/>
    <path d="M2,30 C6,20 20,17 30,19 C38,21 40,26 36,29 C26,36 22,50 32,66 C36,71 42,74 44,74 C20,78 -4,58 2,30Z" fill="url(#eg2)"/>
    <path d="M36,25 C28,28 20,40 22,54 C24,68 36,75 46,74 C58,73 66,64 68,55 C60,62 46,62 38,54 C30,46 32,34 40,30 C40,27 38,25 36,25Z" fill="url(#eg3)"/>
  </svg>
  <div class="abs" style="left:1160.4px;top:60.4px;width:9.6px;height:4px;border-radius:2px;background:#b4b2b6"></div>

  <!-- store -->
  <svg style="left:1213px;top:16px" width="40" height="40" viewBox="0 0 40 40">
    <path d="M9.4,11 V5.4 Q9.4,2.6 12.2,2.6 H26.8 Q29.6,2.6 29.6,5.4 V11" fill="none" stroke="#3c9bd2" stroke-width="2.6"/>
    <path d="M2.2,9.2 H37.2 V32 Q37.2,38.8 30.4,38.8 H9 Q2.2,38.8 2.2,32Z" fill="#f2f2f5"/>
    <rect x="12.4" y="15.6" width="6" height="6" fill="#e9452c"/><rect x="20.4" y="15.6" width="6" height="6" fill="#3aa83c"/>
    <rect x="12.4" y="23.8" width="6" height="6" fill="#189be2"/><rect x="20.4" y="23.8" width="6" height="6" fill="#f8b91c"/>
  </svg>

  <!-- active app -->
  <div class="abs" style="left:1268px;top:5.6px;width:60px;height:63px;border-radius:7px;background:rgba(255,255,255,.055);border:1px solid rgba(255,255,255,.035)"></div>
  <svg style="left:1279px;top:12px" width="42" height="42" viewBox="0 0 42 42">
    <rect x="4.6" y="16" width="27.4" height="19" fill="#9c9c9c"/>
    <rect x="6.6" y="18" width="23.4" height="16" fill="#4d4d4d"/>
    <rect x="1.6" y="34.4" width="32.4" height="3.8" rx=".8" fill="#9e9e9e"/>
    <g transform="translate(28.6,15)"><path d="M-1.49,-6.22 L-1.10,-9.33 L1.10,-9.33 L1.49,-6.22 L3.34,-5.46 L5.82,-7.38 L7.38,-5.82 L5.46,-3.34 L6.22,-1.49 L9.33,-1.10 L9.33,1.10 L6.22,1.49 L5.46,3.34 L7.38,5.82 L5.82,7.38 L3.34,5.46 L1.49,6.22 L1.10,9.33 L-1.10,9.33 L-1.49,6.22 L-3.34,5.46 L-5.82,7.38 L-7.38,5.82 L-5.46,3.34 L-6.22,1.49 L-9.33,1.10 L-9.33,-1.10 L-6.22,-1.49 L-5.46,-3.34 L-7.38,-5.82 L-5.82,-7.38 L-3.34,-5.46Z" fill="#8e94b0"/><circle r="4" fill="#c2c9e4"/><circle r="2.6" fill="#1a2a72"/></g>
  </svg>
  <div class="abs" style="left:1287px;top:60px;width:24.4px;height:4.8px;border-radius:2.4px;background:#4cc2ff"></div>

  <!-- second app -->
  <svg style="left:1345px;top:12px" width="44" height="44" viewBox="0 0 44 44">
    <rect x="2.4" y="17" width="30.8" height="22.8" fill="#aaa"/>
    <rect x="4.2" y="18.8" width="27.2" height="19.2" fill="#555"/>
    <circle cx="17" cy="25.4" r="3" fill="#f0ece8"/>
    <path d="M13.2,36.4 Q13.2,29.4 17,29.4 Q20.8,29.4 20.8,36.4Z" fill="#f0ece8"/>
    <g transform="translate(28.8,17)"><path d="M-1.49,-6.22 L-1.10,-9.33 L1.10,-9.33 L1.49,-6.22 L3.34,-5.46 L5.82,-7.38 L7.38,-5.82 L5.46,-3.34 L6.22,-1.49 L9.33,-1.10 L9.33,1.10 L6.22,1.49 L5.46,3.34 L7.38,5.82 L5.82,7.38 L3.34,5.46 L1.49,6.22 L1.10,9.33 L-1.10,9.33 L-1.49,6.22 L-3.34,5.46 L-5.82,7.38 L-7.38,5.82 L-5.46,3.34 L-6.22,1.49 L-9.33,1.10 L-9.33,-1.10 L-6.22,-1.49 L-5.46,-3.34 L-7.38,-5.82 L-5.82,-7.38 L-3.34,-5.46Z" fill="#8e94b0"/><circle r="4" fill="#b9c2e6"/><circle r="2.7" fill="#1a2a86"/></g>
  </svg>

  <!-- tray -->
  <svg style="left:1536px;top:29px" width="20" height="14" viewBox="0 0 20 14" fill="none" stroke="#fff" stroke-width="1.6" stroke-linecap="round" stroke-linejoin="round"><path d="M2.2,11 L10,3.2 L17.8,11"/></svg>
  <svg style="left:1580px;top:25px" width="30" height="24" viewBox="0 0 30 24">
    <path d="M7,19.6 Q2.4,19.6 2.4,15.2 Q2.4,11.4 6.4,10.8 Q7.4,5 13.4,5 Q18,5 19.8,9 Q27.4,9 27.4,14.6 Q27.4,19.6 22.4,19.6Z" fill="#9a98a0"/>
    <path d="M5.4,2.6 L25.6,21.4" stroke="#241c2c" stroke-width="4.4"/>
    <path d="M5.4,2.6 L25.6,21.4" stroke="#fff" stroke-width="1.7" stroke-linecap="round"/>
  </svg>
  <div class="t tw" id="eng" style="left:1634.2px;top:15.1px;line-height:20px;font-size:17px">ENG</div>
  <div class="t tw" id="us" style="left:1641.2px;top:40.1px;line-height:20px;font-size:17px;letter-spacing:-1.5px">US</div>
  <!-- wifi -->
  <svg style="left:1696px;top:24px" width="28" height="24" viewBox="0 0 28 24" fill="none" stroke="#fff" stroke-width="1.9" stroke-linecap="round">
    <path d="M2.2,9.6 Q14,-1.6 25.8,9.6"/><path d="M6,13.4 Q14,5.6 22,13.4"/><path d="M9.8,17 Q14,12.8 18.2,17"/>
    <circle cx="14" cy="19.6" r="1.7" fill="#fff" stroke="none"/>
  </svg>
  <!-- speaker -->
  <svg style="left:1732px;top:25px" width="28" height="24" viewBox="0 0 28 24" fill="none" stroke="#fff" stroke-width="1.6" stroke-linejoin="round" stroke-linecap="round">
    <path d="M2.6,8.6 H6.6 L12.6,3.2 V19.6 L6.6,14.6 H2.6Z"/>
    <path d="M15.4,8.2 Q17.4,11.6 15.4,15"/>
    <path d="M18.6,5.6 Q22.4,11.6 18.6,17.6" opacity=".55"/>
    <path d="M21.8,3.2 Q27.4,11.6 21.8,20" opacity=".3"/>
  </svg>
  <!-- battery -->
  <svg style="left:1768px;top:22px" width="32" height="26" viewBox="0 0 32 26" fill="none">
    <rect x="4.8" y="7.2" width="19.6" height="13.6" rx="2.6" stroke="#fff" stroke-width="1.7"/>
    <path d="M25.2,11.4 H26.6 Q28.4,11.4 28.4,13 V15 Q28.4,16.6 26.6,16.6 H25.2Z" fill="#fff"/>
    <path d="M11.6,10 H21.6 V18.2 H7.4 V15.2Z" fill="#fff"/>
    <path d="M7.6,1.4 L3,9.2 H6.6 L5,14.8 L10.4,6.6 H6.8Z" fill="#fff" stroke="#231d2d" stroke-width=".9"/>
  </svg>
  <div class="t tw" id="clk" style="right:16.4px;top:13px;line-height:20px">9:43 am</div>
  <div class="t tw" id="dat" style="right:16.4px;top:38.4px;line-height:20px;letter-spacing:0.45px">28/4/2025</div>
</div>
</body>
</html>
